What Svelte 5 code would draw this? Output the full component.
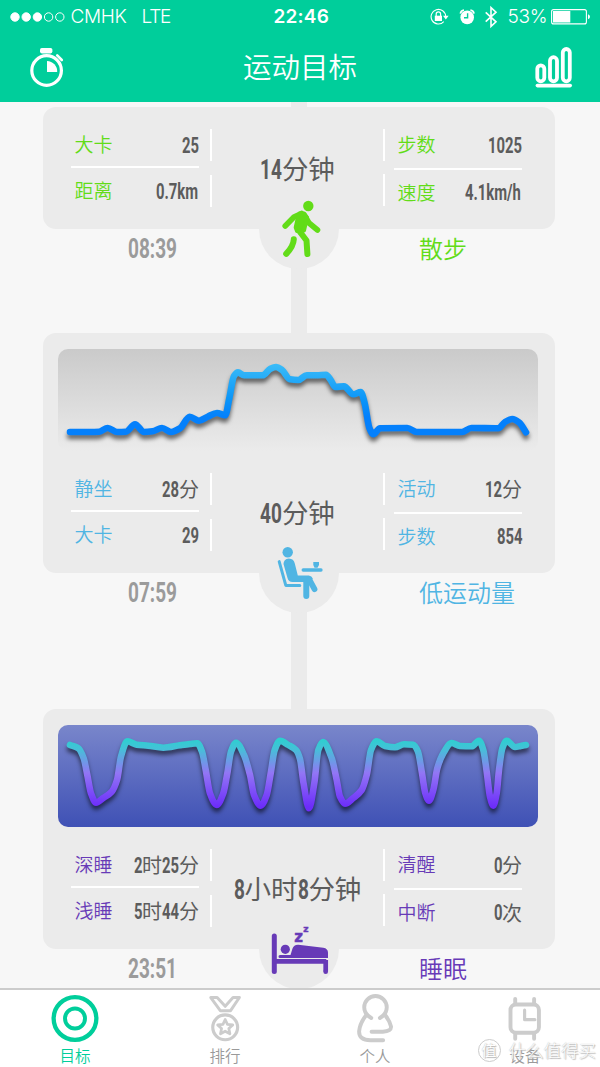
<script lang="ts">
  type Point = [number, number];
  type Stat = { label: string; value: string };
  type Entry = {
    kind: "walk" | "sit" | "sleep";
    name: string;
    time: string;
    duration: string;
    left: Stat[];
    right: Stat[];
    line?: Point[];
  };

  const sitLine: Point[] = [
    [12, 83], [32, 83], [41.3, 82.7], [49.7, 79], [59.3, 83], [68, 82.7], [77, 75.3], [86, 83],
    [94.7, 82.3], [104, 79], [113, 83], [122, 79.3], [131.7, 67.7], [141, 71.7], [149.7, 67.7],
    [159, 64], [167.3, 66.3], [171.3, 49.3], [176, 27], [180, 23.3], [186, 26.3], [195.3, 26.3],
    [204.7, 26.3], [212, 20], [218, 18], [224, 21], [232, 30.3], [240.3, 31], [248.7, 26.3],
    [258.7, 26.3], [268, 25.7], [272.7, 31], [277.3, 38], [286, 37.3], [295.3, 45.3], [302.7, 43],
    [306.7, 54.3], [311.3, 78.7], [315.3, 85.3], [322, 79.3], [349.3, 79], [358.7, 83], [404, 83],
    [413.3, 79], [440.3, 79.3], [447, 73], [454.3, 70], [461.3, 73.7], [468, 83.3],
  ];

  const sleepLine: Point[] = [
    [12, 20], [20.3, 23.3], [25.7, 33.3], [29.3, 50], [33, 68.3], [38, 77.7], [45.3, 73],
    [53.7, 66.7], [59, 55], [63, 31.7], [69.3, 16.3], [78.7, 19.7], [90.3, 20.7], [105.3, 22.7],
    [122, 20.3], [132, 19], [139.3, 18.3], [144, 26.7], [147.7, 45], [152, 68.3], [158.7, 80],
    [165.3, 68.3], [169.3, 48.3], [173, 26.7], [178, 17.7], [186, 30], [192, 50], [196, 70],
    [202.7, 80.7], [208.7, 70], [212.7, 48.3], [216.7, 25], [222, 15.7], [230.3, 20], [238, 25],
    [242, 34], [245.5, 58], [251, 83.3], [256.3, 58.3], [260.3, 25], [265, 17], [273.7, 33.3],
    [278.7, 55], [282, 71.7], [287, 78.7], [295.3, 73], [303.7, 65], [308.7, 50], [313, 25],
    [318.7, 16.3], [327, 21], [337, 22.3], [346, 19.3], [355.3, 19.7], [360, 26.7], [364, 48.3],
    [367.3, 68.3], [371, 75.7], [375.3, 65], [379.3, 43.3], [385.3, 28.3], [393.7, 18], [402, 21],
    [413.7, 21.3], [421, 15.7], [425.3, 25], [428.7, 46.7], [432, 71.7], [435.3, 80.7],
    [438.7, 68.3], [441, 45], [444.3, 23.3], [448.7, 15.7], [457, 22], [462.7, 21], [468, 20],
  ];

  const entries: Entry[] = [
    {
      kind: "walk",
      name: "散步",
      time: "08:39",
      duration: "14分钟",
      left: [{ label: "大卡", value: "25" }, { label: "距离", value: "0.7km" }],
      right: [{ label: "步数", value: "1025" }, { label: "速度", value: "4.1km/h" }],
    },
    {
      kind: "sit",
      name: "低运动量",
      time: "07:59",
      duration: "40分钟",
      left: [{ label: "静坐", value: "28分" }, { label: "大卡", value: "29" }],
      right: [{ label: "活动", value: "12分" }, { label: "步数", value: "854" }],
      line: sitLine,
    },
    {
      kind: "sleep",
      name: "睡眠",
      time: "23:51",
      duration: "8小时8分钟",
      left: [{ label: "深睡", value: "2时25分" }, { label: "浅睡", value: "5时44分" }],
      right: [{ label: "清醒", value: "0分" }, { label: "中断", value: "0次" }],
      line: sleepLine,
    },
  ];

  // advance widths of the condensed numerals, relative to cap height
  const advances: Record<string, number> = { ".": 0.29, ":": 0.28, "/": 0.36, m: 0.86, k: 0.53 };

  function runWidth(run: string, cap: number) {
    return [...run].reduce((sum, c) => sum + (advances[c] ?? 0.555) * cap, 0);
  }

  function runs(text: string) {
    return text.match(/[\x20-\x7e]+|[^\x20-\x7e]+/g) ?? [];
  }

  // monotone cubic through the points
  function smooth(pts: Point[]) {
    const slope = pts.slice(1).map((p, i) => (p[1] - pts[i][1]) / (p[0] - pts[i][0]));
    const tan = pts.map((_, i) => {
      const a = slope[i - 1];
      const b = slope[i];
      if (a === undefined || b === undefined) return a ?? b;
      return a * b <= 0 ? 0 : (2 * a * b) / (a + b);
    });
    let d = `M${pts[0]}`;
    for (let i = 1; i < pts.length; i++) {
      const [x0, y0] = pts[i - 1];
      const [x1, y1] = pts[i];
      const h = (x1 - x0) / 3;
      d += `C${x0 + h},${y0 + tan[i - 1] * h} ${x1 - h},${y1 - tan[i] * h} ${x1},${y1}`;
    }
    return d;
  }
</script>

{#snippet mixed(text: string, cap: number)}
  {#each runs(text) as run}{#if /^[\x20-\x7e]/.test(run)}<svg
        class="num"
        width={runWidth(run, cap)}
        height={cap}><text
          transform="scale(0.69 1)"
          y={cap}
          font-size={cap / 0.711}>{run}</text></svg>{:else}<span>{run}</span>{/if}{/each}
{/snippet}

{#snippet stats(list: Stat[], side: string)}
  <dl class={["stats", side]}>
    {#each list as stat}
      <div class="stat">
        <dt>{stat.label}</dt>
        <dd>{@render mixed(stat.value, 15.3)}</dd>
      </div>
    {/each}
  </dl>
{/snippet}

{#snippet divider(side: string)}
  <div class={["divider", side]}><i></i><i></i></div>
{/snippet}

<div class="app">
  <header>
    <div class="status">
      <svg class="signal" width="56" height="12" viewBox="0 0 56 12">
        <circle cx="5" cy="6" r="4.2" fill="#fff" />
        <circle cx="16.2" cy="6" r="4.2" fill="#fff" />
        <circle cx="27.4" cy="6" r="4.2" fill="#fff" />
        <circle cx="38.6" cy="6" r="4.2" />
        <circle cx="49.8" cy="6" r="4.2" />
      </svg>
      <span class="carrier">CMHK</span>
      <span class="network">LTE</span>
      <span class="clock">22:46</span>
      <svg class="indicators" width="72" height="24" viewBox="0 0 72 24">
        <path d="M13.8 16.6A7.3 7.3 0 1 1 15.7 11.5" stroke-width="1.1" />
        <path d="M13 10.8h5.6l-2.8 3.6z" fill="#fff" stroke="none" />
        <rect x="4.8" y="10.7" width="7.2" height="5.3" fill="#fff" stroke="none" />
        <path d="M6.2 11V9a2.2 2.2 0 0 1 4.4 0v2" stroke-width="1.2" />
        <circle cx="37.2" cy="12.4" r="6.8" fill="#fff" stroke="none" />
        <path d="M30.4 8.6a4 4 0 0 1 3.6-3.4M44 8.6a4 4 0 0 0-3.6-3.4" stroke-width="1.7" />
        <path d="M37.6 8.2v4.6H34" stroke="#00ce9b" stroke-width="1.4" />
        <path d="M55.7 7.4l10.3 9.4-5 4.6V2.600l5 4.600-10.300 9.400" stroke-width="1.6" />
      </svg>
      <span class="percent">53%</span>
      <svg class="battery" width="40" height="16" viewBox="0 0 40 16">
        <rect x=".6" y=".6" width="34.8" height="14.3" rx="2" stroke-width="1.1" />
        <rect x="2" y="2" width="17.3" height="11.5" fill="#fff" stroke="none" />
        <path d="M37 5.3q2 .6 2 2.5t-2 2.5z" fill="#fff" stroke="none" />
      </svg>
    </div>
    <div class="titlebar">
      <svg width="36" height="40" viewBox="0 0 36 40">
        <circle cx="17.6" cy="22.5" r="14.8" stroke-width="3.2" />
        <rect x="11" y="0" width="12.4" height="5.4" rx="1.8" fill="#fff" stroke="none" />
        <path d="M18 13v11h10.2A10.5 10.5 0 0 0 18 13z" fill="#fff" stroke="none" />
        <path d="M28.2 7.4l4.6 4.6" stroke-width="2.6" stroke-linecap="round" />
      </svg>
      <h1>运动目标</h1>
      <svg width="38" height="42" viewBox="0 0 38 42">
        <g stroke-width="3.8">
          <rect x="2.3" y="18.3" width="7" height="16" rx="3.5" />
          <rect x="15" y="10.2" width="7" height="24.1" rx="3.5" />
          <rect x="27.8" y="2" width="7" height="32.3" rx="3.5" />
        </g>
        <path d="M2.4 38.6h32.8" stroke-width="3.6" stroke-linecap="round" />
      </svg>
    </div>
  </header>

  <main>
    {#each entries as entry (entry.kind)}
      <article class={entry.kind}>
        <div class="card">
          {#if entry.line}
            <svg class="chart" width="480" height="102" viewBox="0 0 480 102">
              <defs>
                <linearGradient id="line-sit" gradientUnits="userSpaceOnUse" x1="0" y1="15" x2="0" y2="86">
                  <stop offset="0" stop-color="#3abcf8" />
                  <stop offset=".5" stop-color="#0b95f8" />
                  <stop offset=".75" stop-color="#0480fc" />
                </linearGradient>
                <linearGradient id="line-sleep" gradientUnits="userSpaceOnUse" x1="0" y1="14" x2="0" y2="82">
                  <stop offset="0" stop-color="#2cd0cf" />
                  <stop offset=".15" stop-color="#45c0d8" />
                  <stop offset=".5" stop-color="#9276f5" />
                  <stop offset="1" stop-color="#6c2cfa" />
                </linearGradient>
              </defs>
              <path d={smooth(entry.line)} stroke="url(#line-{entry.kind})" />
            </svg>
          {/if}
          <div class="summary">
            {@render stats(entry.left, "left")}
            {@render divider("left")}
            <div class="duration">{@render mixed(entry.duration, 19.6)}</div>
            {@render divider("right")}
            {@render stats(entry.right, "right")}
          </div>
          <svg class="badge" width="80" height="80" viewBox="0 0 80 80">
            <circle cx="40" cy="40" r="40" fill="#ebebeb" />
            {#if entry.kind === "walk"}
              <g fill="none" stroke="currentColor" stroke-linecap="round" stroke-linejoin="round">
                <circle cx="49.3" cy="17" r="5.2" fill="currentColor" stroke="none" />
                <path d="M42.5 24.5L35 28l-8.8 9" stroke-width="5.6" />
                <path d="M45 25.5l5 8.5 8.5 7" stroke-width="5.6" />
                <path d="M40.5 24.5h3.5l4 4-3 13-7 .5-1.3-3.5L39 28z" fill="currentColor" stroke-width="4" />
                <path d="M41 43l6.500 8.500.9 13.500" stroke-width="6" />
                <path d="M34.8 50.300q-.3 6.700-7.600 14.600" stroke-width="6" />
              </g>
            {:else if entry.kind === "sit"}
              <g fill="none" stroke="currentColor" stroke-linecap="round" stroke-linejoin="round">
                <circle cx="28.7" cy="19.3" r="5.2" fill="currentColor" stroke="none" />
                <path d="M20.2 28.6l6.6 23.8h14" stroke-width="3" />
                <path
                  d="M24.500 31q0-5 5.300-5.600 5 .2 6 5l3 12h11q3 .3 4 3L50 51.500l-5.700-2.500H33.500q-4 0-5-4z"
                  fill="currentColor"
                  stroke="none"
                />
                <path d="M47.3 49v14" stroke-width="6" />
                <path d="M50.500 47l5 9.200" stroke-width="5.800" />
                <path d="M44.200 37H62" stroke-width="3.300" />
                <path d="M54.300 29H60v3l-1.500 2.700h-3L54.300 32z" fill="currentColor" stroke="none" />
              </g>
            {:else}
              <path d="M15.3 27v35.400" stroke="currentColor" stroke-width="5" stroke-linecap="round" />
              <path d="M15 52.300h52.300M66.700 51v11.600" fill="none" stroke="currentColor" stroke-width="4.700" />
              <circle cx="66.700" cy="62.700" r="2.350" fill="currentColor" />
              <circle cx="26.300" cy="40.300" r="4.600" fill="currentColor" />
              <path
                d="M21 46h10.500l2-6.500q1.300-4 5.800-3.800l25 3q4.700.8 4.700 5V49H21a1.500 1.500 0 0 1 0-3z"
                fill="currentColor"
              />
              <text x="35.200" y="32.700" font-size="15">z</text>
              <text x="44.200" y="22.500" font-size="9">z</text>
            {/if}
          </svg>
        </div>
        <footer>
          <time>{@render mixed(entry.time, 19.6)}</time>
          <span class="name">{entry.name}</span>
        </footer>
      </article>
    {/each}
  </main>

  <nav>
    <a class="active" href="#goal">
      <svg width="50" height="50" viewBox="0 0 50 50">
        <circle cx="25" cy="25" r="21.800" stroke-width="4.400" />
        <circle cx="25" cy="25" r="10.200" stroke-width="4" />
      </svg>
      目标
    </a>
    <a href="#rank">
      <svg width="50" height="50" viewBox="0 0 50 50">
        <path d="M10.500 3.600h6.500l8.200 9 8-9h6.500L30.700 17H20.200z" stroke-width="3" />
        <circle cx="25.200" cy="34" r="12.700" stroke-width="3.200" />
        <path
          d="M25.200 26l2.300 5 5.400.6-4 3.700 1.100 5.400-4.800-2.700-4.800 2.700 1.100-5.400-4-3.700 5.400-.6z"
          stroke-width="2.800"
        />
      </svg>
      排行
    </a>
    <a href="#me">
      <svg width="50" height="50" viewBox="0 0 50 50">
        <path d="M21.200 24.500q-7.200-4-7.200-11a11.500 11.500 0 0 1 23 0q0 7-7 11" />
        <path d="M16 21.500Q9.500 30 8.800 38q-.3 9 11.500 9.200h13" />
        <path d="M35.300 21.500q4.700 6 6 11.500.7 5-8.300 5.600H21.500" />
      </svg>
      个人
    </a>
    <a href="#device">
      <svg width="50" height="50" viewBox="0 0 50 50">
        <rect x="10.200" y="10.700" width="29" height="28.800" rx="5.500" />
        <path d="M15 10V5M34.300 10V5M15 40.500v5.200M34.300 40.500v5.200" />
        <path d="M24.600 16.500v9.700h10.500" stroke-width="3.200" />
      </svg>
      设备
    </a>
  </nav>

  <div class="watermark"><b>值</b>什么值得买</div>
</div>

<style>
  :global(body) {
    background: #f7f7f7;
  }

  .app {
    position: relative;
    display: flex;
    flex-direction: column;
    width: 600px;
    height: 1067px;
    overflow: hidden;
    background: #f7f7f7;
    font-family: "Noto Sans CJK SC", sans-serif;
  }

  header {
    flex: none;
    height: 102px;
    background: #00ce9b;
    color: #fff;
  }
  header svg {
    fill: none;
    stroke: #fff;
  }

  .status {
    display: flex;
    align-items: center;
    height: 33px;
    padding-left: 9.5px;
    font: 300 19px/33px Inter, sans-serif;
  }
  .status svg {
    flex: none;
  }
  .carrier {
    width: 71px;
    margin-left: 5px;
    letter-spacing: -0.3px;
  }
  .network {
    width: 132px;
    letter-spacing: -1.2px;
  }
  .clock {
    width: 156px;
    font-weight: 600;
    letter-spacing: 0.2px;
  }
  .percent {
    width: 43px;
    margin-left: 6px;
    letter-spacing: -0.3px;
  }

  .titlebar {
    display: flex;
    justify-content: space-between;
    align-items: center;
    height: 69px;
    padding: 0 27px 0 29px;
  }
  h1 {
    margin: -4px 0 0;
    font-size: 28.5px;
    font-weight: 350;
    line-height: 69px;
  }

  main {
    flex: 1;
    min-height: 0;
    overflow: hidden;
    padding-top: 5px;
    background: linear-gradient(#ebebeb, #ebebeb) 291px 0 / 16px 100% no-repeat;
  }

  .walk {
    color: #62dc18;
  }
  .sit {
    color: #50b5e3;
  }
  .sleep {
    color: #673ab7;
  }

  .card {
    position: relative;
    width: 512px;
    margin-left: 42.5px;
    border-radius: 13px;
    background: #ebebeb;
  }

  .chart {
    display: block;
    position: relative;
    margin-left: 15.5px;
    top: 16px;
    margin-bottom: 16px;
    border-radius: 10px;
  }
  .chart path {
    fill: none;
    stroke-width: 6.6;
    stroke-linecap: round;
    stroke-linejoin: round;
    filter: drop-shadow(0 4px 2px rgba(0, 0, 0, 0.55));
  }
  .sit .chart {
    background: linear-gradient(#cacaca, #ebebeb);
  }
  .sleep .chart {
    background: linear-gradient(#7986cb, #3f51b5);
  }

  .summary {
    display: flex;
    height: 122px;
    padding-left: 28.5px;
  }

  .stats {
    width: 128px;
    margin: 0;
    padding-top: 15px;
  }
  .stat {
    display: flex;
    justify-content: space-between;
    align-items: baseline;
    height: 44px;
    padding-left: 3.5px;
    line-height: 44px;
  }
  .stat:first-child {
    border-bottom: 2px solid #fff;
  }
  .right .stat:first-child {
    height: 45.5px;
  }
  dt {
    font-size: 19px;
    font-weight: 350;
  }
  dd {
    position: relative;
    top: 1px;
    margin: 0;
    color: #5c5c5c;
    font-size: 20px;
    white-space: nowrap;
  }

  .num {
    overflow: visible;
    fill: currentColor;
    font-family: Roboto, sans-serif;
    font-weight: 700;
  }

  .divider {
    display: flex;
    flex-direction: column;
    gap: 14px;
    width: 2px;
    margin-left: 11px;
    padding-top: 22px;
  }
  .divider.right {
    gap: 13px;
    margin: 0 9px 0 0;
  }
  .divider i {
    height: 32px;
    background: #fff;
  }

  .duration {
    flex: none;
    width: 171px;
    color: #5c5c5c;
    font-size: 26.5px;
    line-height: 122px;
    text-align: center;
    white-space: nowrap;
  }

  .badge {
    position: absolute;
    left: 216.5px;
    bottom: -40px;
  }
  .badge text {
    fill: currentColor;
    stroke: currentColor;
    stroke-width: 0.5;
    font-family: "DejaVu Sans", sans-serif;
    font-weight: 700;
  }

  footer {
    display: flex;
    height: 104px;
    padding-left: 128px;
    line-height: 38px;
  }
  .sit footer {
    height: 136px;
  }
  time {
    width: 291px;
    color: #9b9b9b;
    font-size: 24px;
  }
  .name {
    font-size: 24px;
    font-weight: 350;
  }

  nav {
    display: flex;
    flex: none;
    height: 77px;
    border-top: 2px solid #ccc;
    background: #fff;
  }
  nav a {
    display: flex;
    flex: 1;
    flex-direction: column;
    align-items: center;
    padding-top: 4px;
    color: #9a9a9a;
    font-size: 15.5px;
    font-weight: 350;
    line-height: 24px;
    text-decoration: none;
  }
  nav .active {
    color: #00ce9b;
  }
  nav svg {
    fill: none;
    stroke: #ccc;
    stroke-width: 4;
    stroke-linecap: round;
    stroke-linejoin: round;
  }
  .active svg {
    stroke: #00ce9b;
  }

  .watermark {
    position: absolute;
    right: 4px;
    bottom: 5px;
    display: flex;
    align-items: center;
    gap: 8px;
    color: #fff;
    font-size: 17.5px;
    font-weight: 300;
    line-height: 24px;
    text-shadow: 0 0 1px #aaa, 1px 1px 1px #bbb;
  }
  .watermark b {
    width: 21px;
    height: 21px;
    border: 1px solid #ccc;
    border-radius: 50%;
    font-size: 15px;
    font-weight: 400;
    line-height: 20px;
    text-align: center;
  }
</style>
